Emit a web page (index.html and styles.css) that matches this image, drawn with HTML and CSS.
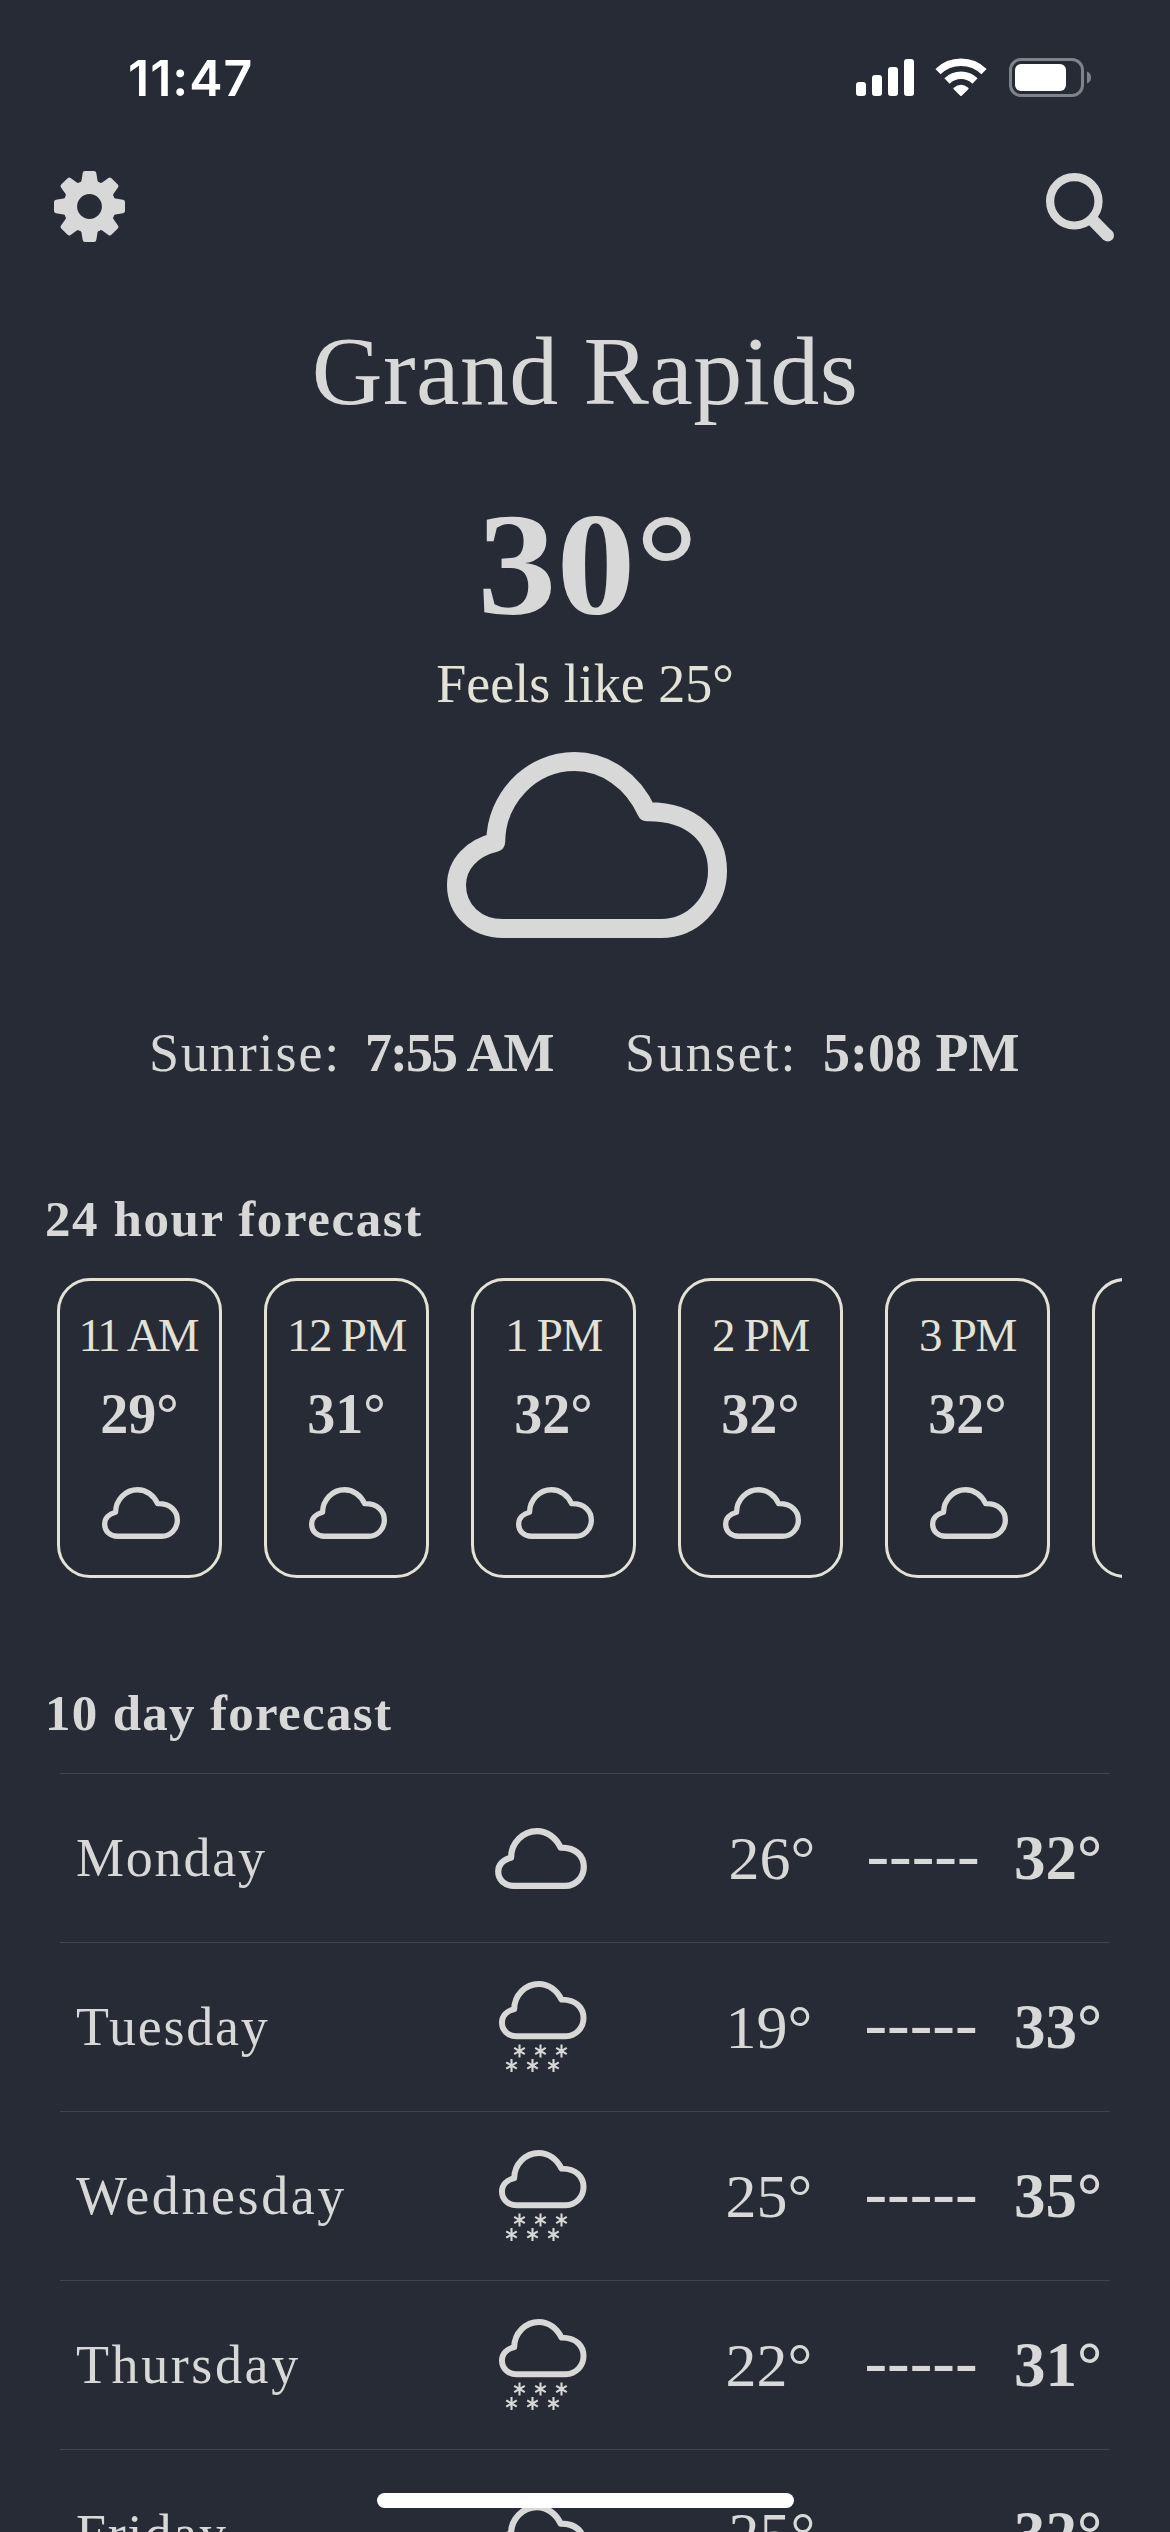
FILE: index.html
```html
<!DOCTYPE html>
<html lang="en">
<head>
<meta charset="utf-8">
<title>Weather</title>
<link rel="stylesheet" href="styles.css">
</head>
<body>
<svg class="defs" width="0" height="0" aria-hidden="true">
  <defs>
    <path id="cloud" d="M199.7 59.7C186 29 158 9.5 127.7 9.5C84 9.5 49 46 48.7 90.3C25 96 9.5 112 9.5 133C9.5 158 29 176.5 56 176.5H214C246 176.5 270.5 150 270.5 118.7C270.5 86 247 59 199.7 59.7Z"/>
    <path id="tooth" d="M-12 -23Q-8.3 -24 -8 -26L-6.8 -33.5Q-6.5 -35.5 -4.5 -35.5H4.5Q6.5 -35.5 6.8 -33.5L8 -26Q8.3 -24 12 -23Z"/>
    <path id="flake" d="M0 -6.5V6.5M-5.3 -3.2L5.3 3.2M-5.3 3.2L5.3 -3.2"/>
    <g id="snow">
      <use href="#cloud" class="cloud-line" transform="scale(.3125)"/>
      <g class="flakes">
        <use href="#flake" x="20.5" y="70"/><use href="#flake" x="41.5" y="70"/><use href="#flake" x="62.5" y="70"/>
        <use href="#flake" x="12.5" y="84.5"/><use href="#flake" x="33.5" y="84.5"/><use href="#flake" x="54.5" y="84.5"/>
      </g>
    </g>
  </defs>
</svg>
<main class="screen">
  <div class="status">
    <span class="clock">11:47</span>
    <div class="indicators">
      <svg width="58" height="40" viewBox="0 0 58 40" fill="#fff"><rect y="24" width="10" height="14" rx="3"/><rect x="16" y="17" width="10" height="21" rx="3"/><rect x="32" y="9" width="10" height="29" rx="3"/><rect x="48" y="1" width="10" height="37" rx="3"/></svg>
      <svg class="wifi" width="52" height="40" viewBox="0 0 52 40" fill="none" stroke="#fff"><path stroke-width="7.5" d="M3 13.6A33 33 0 0 1 49 13.6"/><path stroke-width="7.5" d="M12 23A20 20 0 0 1 40 23"/><path fill="#fff" stroke="none" d="M18.7 29.8Q26 23.5 33.3 29.8Q34 30.5 33.3 31.2L26.7 37.7Q26 38.4 25.3 37.7L18.7 31.2Q18 30.5 18.7 29.8Z"/></svg>
      <svg class="battery" width="82" height="40" viewBox="0 0 82 40"><rect x="1.5" y="1.5" width="72" height="36" rx="10.5" fill="none" stroke="#7f8289" stroke-width="3"/><rect x="6" y="6" width="51" height="27" rx="6" fill="#fff"/><path d="M78 13.5Q82 15 82 19.5T78 25.5Z" fill="#7f8289"/></svg>
    </div>
  </div>

  <nav class="toolbar">
    <svg width="71" height="71" viewBox="-35.5 -35.5 71 71" fill="#d8d8d8"><circle r="19.2" fill="none" stroke="#d8d8d8" stroke-width="13.6"/><use href="#tooth"/><use href="#tooth" transform="rotate(45)"/><use href="#tooth" transform="rotate(90)"/><use href="#tooth" transform="rotate(135)"/><use href="#tooth" transform="rotate(180)"/><use href="#tooth" transform="rotate(225)"/><use href="#tooth" transform="rotate(270)"/><use href="#tooth" transform="rotate(315)"/></svg>
    <svg width="70" height="71" viewBox="0 0 70 71" fill="none" stroke="#d8d8d8"><circle cx="29.3" cy="30.3" r="24.2" stroke-width="8.2"/><path d="M47.5 49.5L62.7 65" stroke-width="12.4" transform="translate(0 -.5)"/><circle cx="62.8" cy="64.4" r="6.2" fill="#d8d8d8" stroke="none"/></svg>
  </nav>

  <h1 class="city">Grand Rapids</h1>
  <div class="temp">30°</div>
  <div class="feels">Feels like 25°</div>
  <svg class="hero" width="280" height="186" viewBox="0 0 280 186"><use href="#cloud" class="cloud-line"/></svg>

  <div class="sun">
    <span class="label">Sunrise:</span><b class="rise">7:55 AM</b>
    <span class="label set">Sunset:</span><b>5:08 PM</b>
  </div>

  <h2 class="title hourly-title">24 hour forecast</h2>
  <div class="hours">
    <div class="hour"><span class="when tight">11 AM</span><b>29°</b><svg width="78" height="52" viewBox="0 0 280 186"><use href="#cloud" class="cloud-line"/></svg></div>
    <div class="hour"><span class="when">12 PM</span><b>31°</b><svg width="78" height="52" viewBox="0 0 280 186"><use href="#cloud" class="cloud-line"/></svg></div>
    <div class="hour"><span class="when">1 PM</span><b>32°</b><svg width="78" height="52" viewBox="0 0 280 186"><use href="#cloud" class="cloud-line"/></svg></div>
    <div class="hour"><span class="when">2 PM</span><b>32°</b><svg width="78" height="52" viewBox="0 0 280 186"><use href="#cloud" class="cloud-line"/></svg></div>
    <div class="hour"><span class="when">3 PM</span><b>32°</b><svg width="78" height="52" viewBox="0 0 280 186"><use href="#cloud" class="cloud-line"/></svg></div>
    <div class="hour"></div>
  </div>

  <h2 class="title daily-title">10 day forecast</h2>
  <div class="days">
    <div class="day"><span class="name">Monday</span><svg width="92" height="61" viewBox="0 0 280 186"><use href="#cloud" class="cloud-line"/></svg><span class="low warm">26°</span><span class="dash warm">-----</span><b>32°</b></div>
    <div class="day"><span class="name">Tuesday</span><svg class="snow" width="88" height="92"><use href="#snow"/></svg><span class="low">19°</span><span class="dash">-----</span><b>33°</b></div>
    <div class="day"><span class="name wide">Wednesday</span><svg class="snow" width="88" height="92"><use href="#snow"/></svg><span class="low">25°</span><span class="dash">-----</span><b>35°</b></div>
    <div class="day"><span class="name wide">Thursday</span><svg class="snow" width="88" height="92"><use href="#snow"/></svg><span class="low">22°</span><span class="dash">-----</span><b>31°</b></div>
    <div class="day"><span class="name">Friday</span><svg width="92" height="61" viewBox="0 0 280 186"><use href="#cloud" class="cloud-line"/></svg><span class="low warm">25°</span><span class="dash warm">-----</span><b>32°</b></div>
  </div>
  <div class="home"></div>
</main>
</body>
</html>
```
FILE: styles.css
```css
* { box-sizing: border-box; }
body { margin: 0; background: #272b35; }
.defs { position: absolute; }
.screen {
  position: relative;
  display: flex;
  flex-direction: column;
  width: 1170px;
  height: 2532px;
  overflow: hidden;
  background: #272b35;
  color: #d8d8d8;
  font-family: "Liberation Serif", serif;
  font-size: 54px;
  white-space: nowrap;
}
.screen > * { flex-shrink: 0; }
svg { display: block; flex-shrink: 0; }
.cloud-line { fill: none; stroke: #d8d8d8; stroke-width: 19; stroke-linejoin: round; }
.flakes { fill: none; stroke: #d8d8d8; stroke-width: 2.1; }

.status {
  display: flex;
  justify-content: space-between;
  height: 156px;
  padding: 0 79px 0 128px;
}
.clock {
  color: #fff;
  font: 600 50px/156px Inter, sans-serif;
  letter-spacing: 1px;
}
.indicators { display: flex; padding-top: 58px; }
.wifi { margin-left: 21px; }
.battery { margin-left: 22px; }

.toolbar {
  display: flex;
  align-items: center;
  justify-content: space-between;
  height: 101px;
  padding: 0 55px 0 54px;
}

.city {
  margin: 0;
  font-size: 98px;
  font-weight: 400;
  line-height: 228px;
  letter-spacing: .4px;
  text-align: center;
}
.temp {
  font-size: 146px;
  font-weight: 700;
  line-height: 160px;
  text-align: center;
  transform: translateX(3px) scaleX(1.08);
}
.feels { color: #e2e2d6; line-height: 78px; text-align: center; }
.hero { margin: 29px 0 0 447px; }

.sun { display: flex; height: 70px; margin-top: 80px; padding-left: 149px; line-height: 70px; }
.label { width: 216px; letter-spacing: 1.9px; }
.label.set { width: 198px; }
.rise { width: 260px; letter-spacing: -2px; word-spacing: 2px; }

.title { margin: 0 0 0 45px; font-size: 51px; line-height: 80px; }
.hourly-title { margin-top: 91px; letter-spacing: 1.6px; }
.daily-title { margin-top: 95px; letter-spacing: 1.3px; }

.hours {
  display: flex;
  gap: 42px;
  width: 1065px;
  margin: 19px 0 0 57px;
  overflow: hidden;
}
.hour {
  display: flex;
  flex: 0 0 165px;
  flex-direction: column;
  align-items: center;
  height: 300px;
  padding-top: 22px;
  border: 3px solid #e2e2d6;
  border-radius: 33px;
}
.when { color: #e2e2d6; font-size: 47px; line-height: 64px; letter-spacing: -1.3px; word-spacing: -1px; }
.when.tight { margin-left: -4px; letter-spacing: -3px; word-spacing: 3px; }
.hour b { margin-top: 15px; font-size: 56px; line-height: 64px; }
.hour svg { margin: 41px 0 0 3px; }

.days { margin: 20px 60px 0; }
.day {
  display: grid;
  grid-template-columns: 418px 185px 174px 136px 138px;
  align-items: center;
  height: 169px;
  padding-left: 16px;
  border-top: 1px solid #40444c;
}
.day svg { margin-left: 1px; }
.day .snow { margin-left: 5px; }
.name { letter-spacing: 1.8px; }
.name.wide { letter-spacing: 2.6px; }
.low { width: 180px; text-align: center; font-size: 62px; }
.low.warm { transform: translateX(3px); }
.dash { padding-bottom: 8px; font-size: 68px; text-align: center; }
.dash.warm { transform: translateX(2px); }
.day b { font-size: 63px; text-align: center; }

.home {
  position: absolute;
  top: 2493px;
  left: 377px;
  width: 417px;
  height: 15px;
  border-radius: 8px;
  background: #fff;
}
```
